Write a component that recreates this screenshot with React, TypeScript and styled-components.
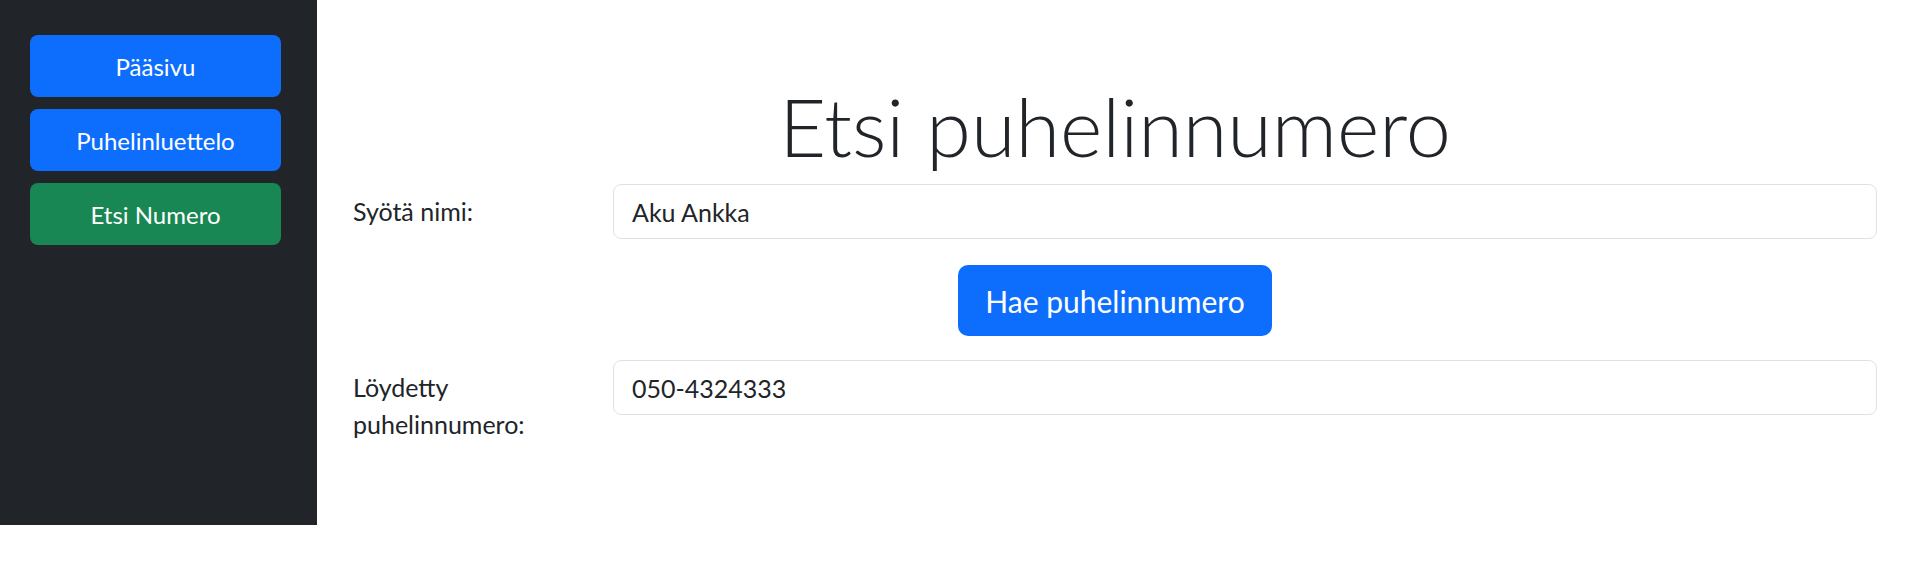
import styled, { createGlobalStyle } from "styled-components";

const GlobalStyle = createGlobalStyle`
  body {
    margin: 0;
    background: #fff;
    color: #212529;
    font-family: Lato, "Noto Sans", sans-serif;
  }
`;

const Layout = styled.div`
  display: flex;
  align-items: flex-start;
`;

const Sidebar = styled.nav`
  width: 317px;
  height: 525px;
  box-sizing: border-box;
  padding: 35px 36px 0 30px;
  background: #212529;
  display: flex;
  flex-direction: column;
  gap: 12px;
  flex-shrink: 0;
`;

const NavButton = styled.button<{ $active?: boolean }>`
  height: 62px;
  border: none;
  border-radius: 8px;
  background: ${(p) => (p.$active ? "#198754" : "#0d6efd")};
  color: #fff;
  font-family: inherit;
  font-size: 24px;
  cursor: pointer;
`;

const Main = styled.main`
  flex: 1;
  padding: 0 29px 0 36px;
`;

const Title = styled.h1`
  margin: 77px 0 10px;
  font-size: 81px;
  font-weight: 300;
  line-height: 1.2;
  text-align: center;
`;

const FormRow = styled.div`
  display: flex;
  align-items: flex-start;
  gap: 30px;
`;

const Label = styled.label`
  width: 230px;
  flex-shrink: 0;
  padding-top: 9px;
  font-size: 25px;
  line-height: 37px;
`;

const Field = styled.input`
  flex: 1;
  min-width: 0;
  height: 55px;
  box-sizing: border-box;
  padding: 0 18px;
  border: 1px solid #dee2e6;
  border-radius: 8px;
  font-family: inherit;
  font-size: 25px;
  color: #212529;
  background: #fff;
  outline: none;
`;

const ButtonRow = styled.div`
  display: flex;
  justify-content: center;
  margin: 26px 0 24px;
`;

const SearchButton = styled.button`
  height: 71px;
  padding: 0 27px;
  border: none;
  border-radius: 10px;
  background: #0d6efd;
  color: #fff;
  font-family: inherit;
  font-size: 30px;
  cursor: pointer;
`;

export default function App() {
  return (
    <>
      <GlobalStyle />
      <Layout>
        <Sidebar>
          <NavButton>Pääsivu</NavButton>
          <NavButton>Puhelinluettelo</NavButton>
          <NavButton $active>Etsi Numero</NavButton>
        </Sidebar>
        <Main>
          <Title>Etsi puhelinnumero</Title>
          <FormRow>
            <Label htmlFor="nimi">Syötä nimi:</Label>
            <Field id="nimi" defaultValue="Aku Ankka" />
          </FormRow>
          <ButtonRow>
            <SearchButton>Hae puhelinnumero</SearchButton>
          </ButtonRow>
          <FormRow>
            <Label htmlFor="numero">Löydetty puhelinnumero:</Label>
            <Field id="numero" defaultValue="050-4324333" readOnly />
          </FormRow>
        </Main>
      </Layout>
    </>
  );
}
